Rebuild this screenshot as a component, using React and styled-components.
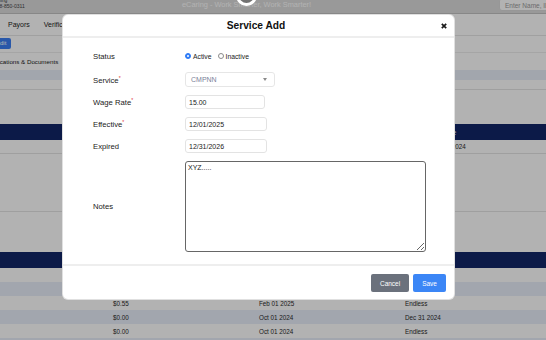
import React from "react";
import styled, { createGlobalStyle } from "styled-components";

const GlobalStyle = createGlobalStyle`
  html, body {
    margin: 0;
    padding: 0;
  }
  body {
    width: 546px;
    height: 340px;
    overflow: hidden;
    background: #fff;
    font-family: "Liberation Sans", Arial, Helvetica, sans-serif;
    color: #333;
  }
  * {
    box-sizing: border-box;
  }
`;

const Page = styled.div`
  position: relative;
  width: 546px;
  height: 340px;
  overflow: hidden;
`;

/* ---------- page behind the modal ---------- */

const TopBar = styled.header`
  height: 14px;
  display: flex;
  background: #dcdcdc;
  border-bottom: 1px solid #c2c2c2;
`;
const Org = styled.div`
  flex: none;
  width: 188px;
  margin: -3px 0 0 -6px;
  font-size: 5px;
  line-height: 6px;
  color: #444;
`;
const Tagline = styled.div`
  flex: none;
  width: 317px;
  font-size: 7.4px;
  line-height: 10px;
  color: #fff;
`;
const Search = styled.div`
  flex: none;
  width: 70px;
  height: 13px;
  margin-top: -2px;
  padding: 3px 5px 0;
  background: #fff;
  border: 1px solid #d8d8d8;
  border-radius: 3px;
  font-size: 6.5px;
  color: #9a9a9a;
  white-space: nowrap;
`;

const Nav = styled.nav`
  height: 22px;
  display: flex;
  align-items: center;
  gap: 14px;
  padding-left: 8px;
  border-bottom: 1px solid #e6e6e6;
  font-size: 7px;
  color: #222;
`;

const Toolbar = styled.div`
  height: 17px;
  display: flex;
  align-items: flex-start;
  padding-top: 2px;
  border-bottom: 1px solid #ececec;
`;
const EditButton = styled.button`
  height: 11px;
  margin-left: -9px;
  padding: 0 5px;
  border: 0;
  border-radius: 2px;
  background: #3c7ff2;
  color: #fff;
  font: inherit;
  font-size: 6px;
  line-height: 11px;
`;

const Tabs = styled.div`
  height: 17px;
  display: flex;
  align-items: center;
  margin-left: -14px;
  font-size: 6.2px;
  color: #222;
`;

const Band = styled.div`
  height: 10px;
  background: #e9eef8;
`;
const Strip = styled.div`
  height: ${(p) => p.h}px;
  border-bottom: 1px solid ${(p) => (p.line ? "#e4e4e4" : "transparent")};
`;

const Grid = styled.div`
  display: grid;
  grid-template-columns: ${(p) => p.cols};
  align-items: center;
  height: ${(p) => p.h || 14}px;
  font-size: 6.3px;
  background: ${(p) =>
    p.head ? "#122667" : p.alt ? "#e8eefa" : "#fff"};
  color: ${(p) => (p.head ? "#fff" : "#2a2a2a")};
  border-bottom: ${(p) => (p.line ? "1px solid #e4e4e4" : "0")};
  white-space: nowrap;
`;

/* ---------- overlay ---------- */

const Backdrop = styled.div`
  position: absolute;
  inset: 0;
  background: rgba(0, 0, 0, 0.3);
`;

const Spinner = styled.div`
  position: absolute;
  left: 236px;
  top: -15px;
  width: 21px;
  height: 21px;
  border: 3px solid #fff;
  border-radius: 50%;
  background: rgba(0, 0, 0, 0.25);
`;

const Modal = styled.div`
  position: absolute;
  left: 62px;
  top: 14px;
  width: 393px;
  height: 286px;
  display: flex;
  flex-direction: column;
  background: #fff;
  border-radius: 6px;
  border: 1px solid rgba(0, 0, 0, 0.12);
  overflow: hidden;
`;

const Header = styled.div`
  height: 23px;
  display: flex;
  align-items: center;
  padding: 0 7px 0 8px;
  border-bottom: 2px solid #eeeeee;
`;
const Title = styled.h2`
  flex: 1;
  margin: 0;
  text-align: center;
  font-size: 10.2px;
  font-weight: 700;
  color: #111;
`;
const Close = styled.button`
  display: flex;
  padding: 0;
  border: 0;
  background: none;
`;

const Body = styled.div`
  display: grid;
  grid-template-columns: 92px 1fr;
  grid-template-rows: 16px 15px 14px 14px 14px 91px;
  row-gap: 8px;
  align-items: center;
  padding: 10px 0 12px 30px;
  border-bottom: 2px solid #eeeeee;
`;
const Label = styled.label`
  font-size: 7.7px;
  color: #222;
`;
const Star = styled.span`
  color: #e11d2e;
  font-size: 5px;
  vertical-align: 3px;
`;

const Radios = styled.div`
  display: flex;
  align-items: center;
  font-size: 6.8px;
  color: #222;
`;
const Radio = styled.span`
  width: 6px;
  height: 6px;
  margin-right: 2px;
  border-radius: 50%;
  display: flex;
  align-items: center;
  justify-content: center;
  background: ${(p) => (p.checked ? "#2f7cf6" : "#fff")};
  border: 1px solid ${(p) => (p.checked ? "#2f7cf6" : "#8a8a8a")};
  &::after {
    content: "";
    width: 2px;
    height: 2px;
    border-radius: 50%;
    background: ${(p) => (p.checked ? "#fff" : "transparent")};
  }
`;
const RadioText = styled.span`
  margin-right: 6px;
`;

const SelectBox = styled.div`
  width: 90px;
  height: 15px;
  display: flex;
  align-items: center;
  justify-content: space-between;
  padding: 0 7px 0 5px;
  border: 1px solid #e6e6e6;
  border-radius: 3px;
  font-size: 7px;
  color: #7b8199;
`;

const Input = styled.input`
  width: ${(p) => p.w}px;
  height: 14px;
  padding: 0 3px;
  border: 1px solid #e3e3e3;
  border-radius: 3px;
  font-family: inherit;
  font-size: 7px;
  color: #222;
  outline: none;
`;

const Notes = styled.textarea`
  width: 241px;
  height: 91px;
  padding: 2px 2px;
  border: 1.5px solid #666;
  border-radius: 3px;
  font-family: inherit;
  font-size: 7px;
  color: #222;
  outline: none;
`;

const Footer = styled.div`
  flex: 1;
  display: flex;
  justify-content: flex-end;
  align-items: flex-start;
  gap: 4px;
  padding: 8px 8px 0 0;
`;
const Button = styled.button`
  height: 18px;
  padding: 0 9px;
  border: 0;
  border-radius: 2px;
  background: ${(p) => (p.primary ? "#3b86f6" : "#6b717c")};
  color: #fff;
  font-family: inherit;
  font-size: 6.5px;
`;

const tableCols = "113px 146px 146px 1fr";
const rates = [
  null,
  null,
  ["$0.55", "Feb 01 2025", "Endless"],
  ["$0.00", "Oct 01 2024", "Dec 31 2024"],
  ["$0.00", "Oct 01 2024", "Endless"],
  null,
];

export default function App() {
  return (
    <Page>
      <GlobalStyle />
      <TopBar>
        <Org>
          <div>Billing</div>
          <div>718-850-0311</div>
        </Org>
        <Tagline>eCaring - Work Smarter, Work Smarter!</Tagline>
        <Search>Enter Name, ID</Search>
      </TopBar>
      <Nav>
        <span>Payors</span>
        <span>Verifications</span>
        <span>Services</span>
      </Nav>
      <Toolbar>
        <EditButton>Edit</EditButton>
      </Toolbar>
      <Tabs>Applications &amp; Documents</Tabs>
      <Band />
      <Strip h={10} line />
      <Strip h={34} />
      <Grid cols="120px 155px 155px 1fr" head h={16}>
        <span />
        <span>Service</span>
        <span>Start Date</span>
        <span>End Date</span>
      </Grid>
      <Grid cols="120px 155px 155px 1fr" line>
        <span />
        <span>CMPNN</span>
        <span>Oct 01 2024</span>
        <span>Dec 31 2024</span>
      </Grid>
      <Strip h={58} line />
      <Strip h={40} />
      <Grid cols={tableCols} head h={16}>
        <span />
        <span>Rate</span>
        <span>Start Date</span>
        <span>End Date</span>
      </Grid>
      {rates.map((r, i) => (
        <Grid key={i} cols={tableCols} alt={i % 2 === 1}>
          <span />
          <span>{r && r[0]}</span>
          <span>{r && r[1]}</span>
          <span>{r && r[2]}</span>
        </Grid>
      ))}

      <Backdrop />
      <Spinner />

      <Modal>
        <Header>
          <Title>Service Add</Title>
          <Close aria-label="Close">
            <svg width="6" height="6" viewBox="0 0 6 6">
              <path
                d="M0.8 0.8 L5.2 5.2 M5.2 0.8 L0.8 5.2"
                stroke="#1a1a1a"
                strokeWidth="1.7"
              />
            </svg>
          </Close>
        </Header>
        <Body>
          <Label>Status</Label>
          <Radios>
            <Radio checked />
            <RadioText>Active</RadioText>
            <Radio />
            <RadioText>Inactive</RadioText>
          </Radios>

          <Label>
            Service<Star>*</Star>
          </Label>
          <SelectBox>
            <span>CMPNN</span>
            <svg width="4" height="3" viewBox="0 0 4 3">
              <path d="M0 0 H4 L2 3 Z" fill="#8a8a8a" />
            </svg>
          </SelectBox>

          <Label>
            Wage Rate<Star>*</Star>
          </Label>
          <Input w={80} defaultValue="15.00" />

          <Label>
            Effective<Star>*</Star>
          </Label>
          <Input w={82} defaultValue="12/01/2025" />

          <Label>Expired</Label>
          <Input w={82} defaultValue="12/31/2026" />

          <Label>Notes</Label>
          <Notes defaultValue="XYZ....." />
        </Body>
        <Footer>
          <Button>Cancel</Button>
          <Button primary>Save</Button>
        </Footer>
      </Modal>
    </Page>
  );
}
